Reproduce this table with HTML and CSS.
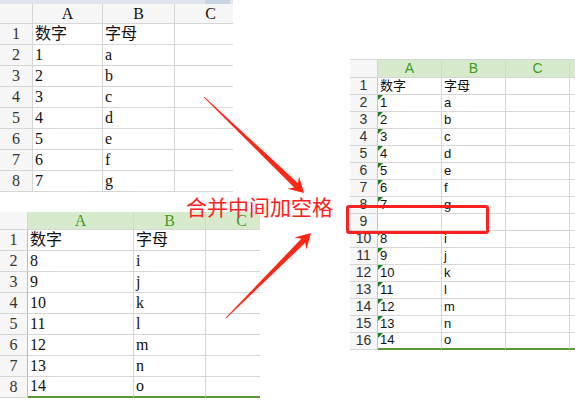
FILE: index.html
```html
<!DOCTYPE html>
<html lang="zh-CN">
  <head>
    <meta charset="UTF-8" />
    <meta name="viewport" content="width=device-width, initial-scale=1.0" />
    <title>合并中间加空格</title>
    <link rel="stylesheet" href="styles.css">
  </head>
  <body>
    <div class="board">
      <div class="left">
        <!-- first sheet: 1..7 -->
        <div class="sheet old">
          <div class="titlebar"></div>
          <div class="grid">
            <div class="hd"></div><div class="hd">A</div><div class="hd">B</div><div class="hd">C</div>
            <div class="rn">1</div><div class="c">数字</div><div class="c">字母</div><div class="c"></div>
            <div class="rn">2</div><div class="c">1</div><div class="c">a</div><div class="c"></div>
            <div class="rn">3</div><div class="c">2</div><div class="c">b</div><div class="c"></div>
            <div class="rn">4</div><div class="c">3</div><div class="c">c</div><div class="c"></div>
            <div class="rn">5</div><div class="c">4</div><div class="c">d</div><div class="c"></div>
            <div class="rn">6</div><div class="c">5</div><div class="c">e</div><div class="c"></div>
            <div class="rn">7</div><div class="c">6</div><div class="c">f</div><div class="c"></div>
            <div class="rn">8</div><div class="c">7</div><div class="c">g</div><div class="c"></div>
          </div>
        </div>

        <!-- second sheet: 8..14 -->
        <div class="sheet new">
          <div class="grid">
            <div class="hd"></div><div class="hd g">A</div><div class="hd g">B</div><div class="hd g">C</div>
            <div class="rn">1</div><div class="c">数字</div><div class="c">字母</div><div class="c"></div>
            <div class="rn">2</div><div class="c">8</div><div class="c">i</div><div class="c"></div>
            <div class="rn">3</div><div class="c">9</div><div class="c">j</div><div class="c"></div>
            <div class="rn">4</div><div class="c">10</div><div class="c">k</div><div class="c"></div>
            <div class="rn">5</div><div class="c">11</div><div class="c">l</div><div class="c"></div>
            <div class="rn">6</div><div class="c">12</div><div class="c">m</div><div class="c"></div>
            <div class="rn">7</div><div class="c">13</div><div class="c">n</div><div class="c"></div>
            <div class="rn">8</div><div class="c last">14</div><div class="c last">o</div><div class="c last"></div>
          </div>
        </div>
      </div>

      <!-- merged result -->
      <div class="right">
        <div class="sheet merged">
          <div class="grid">
            <div class="hd"></div><div class="hd g">A</div><div class="hd g">B</div><div class="hd g">C</div><div class="hd g"></div>
            <div class="rn">1</div><div class="c">数字</div><div class="c">字母</div><div class="c"></div><div class="c"></div>
            <div class="rn">2</div><div class="c mark">1</div><div class="c">a</div><div class="c"></div><div class="c"></div>
            <div class="rn">3</div><div class="c mark">2</div><div class="c">b</div><div class="c"></div><div class="c"></div>
            <div class="rn">4</div><div class="c mark">3</div><div class="c">c</div><div class="c"></div><div class="c"></div>
            <div class="rn">5</div><div class="c mark">4</div><div class="c">d</div><div class="c"></div><div class="c"></div>
            <div class="rn">6</div><div class="c mark">5</div><div class="c">e</div><div class="c"></div><div class="c"></div>
            <div class="rn">7</div><div class="c mark">6</div><div class="c">f</div><div class="c"></div><div class="c"></div>
            <div class="rn">8</div><div class="c mark">7</div><div class="c">g</div><div class="c"></div><div class="c"></div>
            <div class="rn">9</div><div class="c"></div><div class="c"></div><div class="c"></div><div class="c"></div>
            <div class="rn">10</div><div class="c mark">8</div><div class="c">i</div><div class="c"></div><div class="c"></div>
            <div class="rn">11</div><div class="c mark">9</div><div class="c">j</div><div class="c"></div><div class="c"></div>
            <div class="rn">12</div><div class="c mark">10</div><div class="c">k</div><div class="c"></div><div class="c"></div>
            <div class="rn">13</div><div class="c mark">11</div><div class="c">l</div><div class="c"></div><div class="c"></div>
            <div class="rn">14</div><div class="c mark">12</div><div class="c">m</div><div class="c"></div><div class="c"></div>
            <div class="rn">15</div><div class="c mark">13</div><div class="c">n</div><div class="c"></div><div class="c"></div>
            <div class="rn">16</div><div class="c mark last">14</div><div class="c last">o</div><div class="c last"></div><div class="c last"></div>
          </div>
        </div>
      </div>

      <svg class="arrows" width="575" height="412" viewBox="0 0 575 412">
        <polygon points="203.65,97.36 294.12,187.4 287.29,188.74 304,193 299.07,176.48 298,183.36 204.35,96.64" />
        <polygon points="226.35,318.35 305.2,242.76 306.4,249.6 311,233 294.38,237.6 301.24,238.8 225.65,317.65" />
      </svg>
      <div class="note">合并中间加空格</div>
      <div class="focus"></div>
    </div>
  </body>
</html>
```

FILE: styles.css
```css
body {
  margin: 0;
  background: #fff;
}

.board {
  position: relative;
  display: flex;
  width: 575px;
  height: 412px;
  overflow: hidden;
}

.left {
  width: 260px;
  display: flex;
  flex-direction: column;
}

.sheet {
  overflow: hidden;

  .grid {
    display: grid;
    width: max-content;
  }
  .grid > div {
    box-sizing: border-box;
    border-right: 1px solid #d6d6d6;
    border-bottom: 1px solid #d6d6d6;
    display: flex;
    align-items: flex-end;
    white-space: nowrap;
    overflow: hidden;
    color: #111;
  }
  .hd {
    justify-content: center;
    align-items: center !important;
    background: #f7f7f7;
  }
  .hd.g {
    background: #d7ebcc;
    color: #3f9b1d !important;
  }
  .rn {
    justify-content: center;
    background: #f7f7f7;
    color: #333 !important;
  }
  .c {
    padding-left: 2px;
    background: #fff;
  }
}

/* old style sheets, SimSun-ish look */
.old,
.new {
  font: 16px/17px "Liberation Serif", "Noto Sans CJK SC", serif;

  .c,
  .rn {
    padding-bottom: 2px;
  }
}

.old {
  width: 233px;

  .titlebar {
    height: 4px;
    background: linear-gradient(to right, #dfe6ee 0 205px, #c9d5e3 205px 230px, #dfe6ee 230px);
  }
  .grid {
    grid-template-columns: 33px 70px 72px 72px;
    grid-template-rows: 20px repeat(8, 21px);
  }
}

.new {
  width: 260px;
  margin-top: 20px;

  .grid {
    grid-template-columns: 28px 106px 72px 72px;
    grid-template-rows: 18px repeat(8, 21px);
  }
  .rn {
    border-right-color: #bdbdbd !important;
  }
}

.right {
  margin-left: 90px;
  margin-top: 59px;
}

.merged {
  width: 225px;
  border-top: 1px solid #d6d6d6;
  font: 13px/15px "Liberation Sans", "Noto Sans CJK SC", sans-serif;

  .grid {
    grid-template-columns: 28px 64px 64px 64px 64px;
    grid-template-rows: 18px repeat(16, 17px);
  }
  .hd.g {
    font-size: 14px;
  }
  .rn {
    font-size: 14px;
    padding-bottom: 1px;
    border-right-color: #c4c4c4 !important;
  }
  .c {
    padding-bottom: 1px;
  }
}

.last {
  border-bottom: 2px solid #5a9a32 !important;
}

.mark {
  position: relative;

  &::before {
    content: "";
    position: absolute;
    left: 0;
    top: 0;
    border-top: 5px solid #1f7d21;
    border-right: 5px solid transparent;
  }
}

.arrows {
  position: absolute;
  left: 0;
  top: 0;
  pointer-events: none;
  fill: #ff2618;
}

.note {
  position: absolute;
  left: 186px;
  top: 196px;
  font: 21px/21px "Noto Sans CJK SC", sans-serif;
  color: #ff2020;
  white-space: nowrap;
}

.focus {
  position: absolute;
  left: 346px;
  top: 205px;
  width: 143px;
  height: 29px;
  box-sizing: border-box;
  border: 3px solid #ff2020;
  border-radius: 3px;
}
```
